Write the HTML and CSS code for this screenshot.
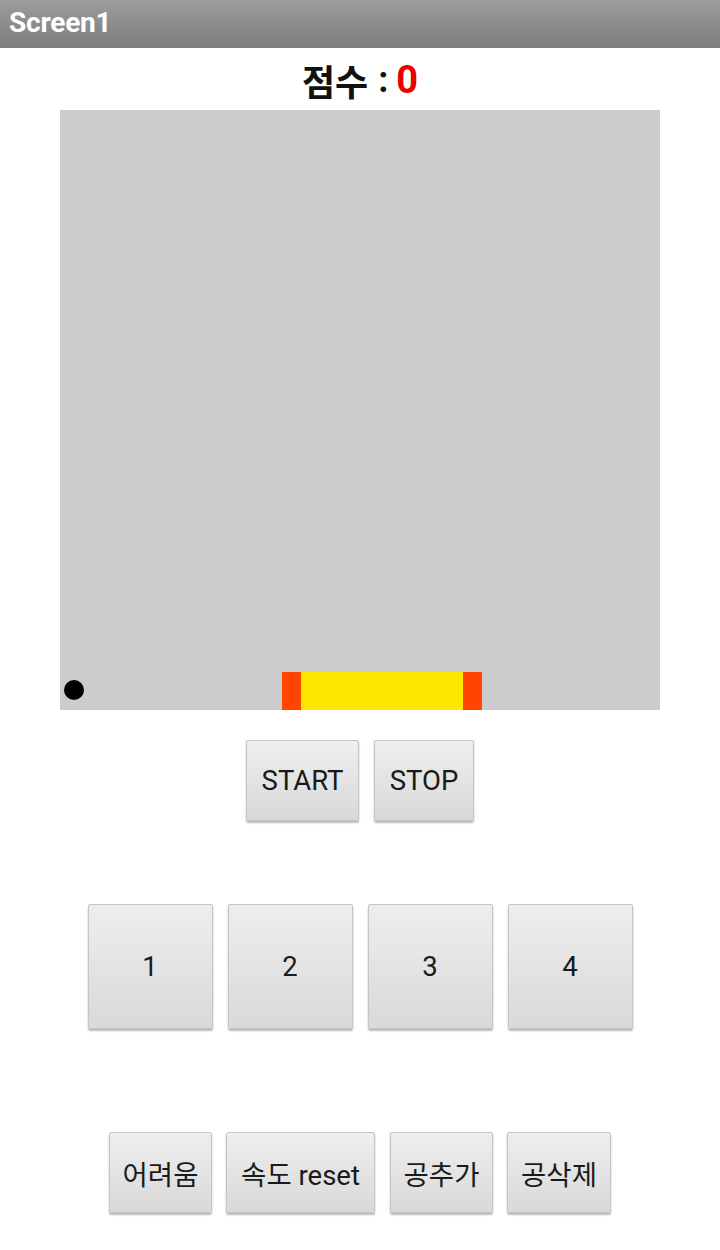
FILE: index.html
```html
<!DOCTYPE html>
<html lang="ko">
<head>
<meta charset="utf-8">
<title>Screen1</title>
<link rel="stylesheet" href="styles.css">
</head>
<body>
<header class="titlebar">Screen1</header>
<div class="score"><span class="score-label">점수</span><span class="score-colon">:</span><span class="score-value">0</span></div>
<div class="canvas">
  <div class="ball"></div>
  <div class="paddle"><span class="paddle-end"></span><span class="paddle-mid"></span><span class="paddle-end"></span></div>
</div>
<div class="row row-ctrl">
  <button class="btn btn-start">START</button>
  <button class="btn btn-stop">STOP</button>
</div>
<div class="row row-num">
  <button class="btn btn-num">1</button>
  <button class="btn btn-num">2</button>
  <button class="btn btn-num">3</button>
  <button class="btn btn-num">4</button>
</div>
<div class="row row-opt">
  <button class="btn btn-opt">어려움</button>
  <button class="btn btn-opt btn-wide">속도 reset</button>
  <button class="btn btn-opt">공추가</button>
  <button class="btn btn-opt btn-last">공삭제</button>
</div>
</body>
</html>
```
FILE: styles.css
```css
html, body {
  margin: 0;
  padding: 0;
  background: #ffffff;
}
body {
  width: 720px;
  height: 1250px;
  font-family: Roboto, "Noto Sans CJK KR", sans-serif;
  overflow: hidden;
}
.titlebar {
  height: 48px;
  box-sizing: border-box;
  padding-left: 9px;
  line-height: 46px;
  font-size: 28px;
  font-weight: bold;
  color: #ffffff;
  background: linear-gradient(#9c9c9c, #7d7d7d);
  letter-spacing: -0.2px;
}
.score {
  height: 62px;
  display: flex;
  justify-content: center;
  align-items: center;
  font-family: "Noto Sans CJK KR", Roboto, sans-serif;
  font-size: 36px;
  font-weight: bold;
  color: #111111;
  padding-top: 2px;
  box-sizing: border-box;
}
.score-colon {
  font-family: Roboto, sans-serif;
  margin: 0 8px 0 10px;
}
.score-value {
  color: #ee0000;
  font-family: Roboto, sans-serif;
  font-size: 38px;
}
.canvas {
  position: relative;
  width: 600px;
  height: 600px;
  margin-left: 60px;
  background: #cccccc;
}
.ball {
  position: absolute;
  left: 4px;
  top: 570px;
  width: 20px;
  height: 20px;
  border-radius: 50%;
  background: #000000;
}
.paddle {
  position: absolute;
  left: 222px;
  top: 562px;
  width: 200px;
  height: 38px;
  display: flex;
}
.paddle-end {
  width: 19px;
  background: #ff4500;
}
.paddle-mid {
  flex: 1;
  background: #ffe800;
}
.row {
  display: flex;
  justify-content: center;
  gap: 15px;
}
.row-ctrl {
  margin-top: 30px;
}
.row-num {
  margin-top: 83px;
}
.row-opt {
  margin-top: 103px;
  gap: 14px;
}
.btn {
  box-sizing: border-box;
  border: 1px solid #c4c4c4;
  border-radius: 2px;
  background: linear-gradient(#eeeeee, #d9d9d9);
  box-shadow: 0 2px 2px rgba(0, 0, 0, 0.28);
  font-family: Roboto, "Noto Sans CJK KR", sans-serif;
  font-size: 27.5px;
  color: #1a1a1a;
  padding: 0;
  margin: 0;
}
.btn-start {
  width: 113px;
  height: 81px;
}
.btn-stop {
  width: 100px;
  height: 81px;
}
.btn-num {
  width: 125px;
  height: 125px;
}
.btn-opt {
  width: 103px;
  height: 81px;
}
.btn-wide {
  width: 149px;
  margin-right: 1px;
}
.btn-last {
  width: 104px;
}
```
